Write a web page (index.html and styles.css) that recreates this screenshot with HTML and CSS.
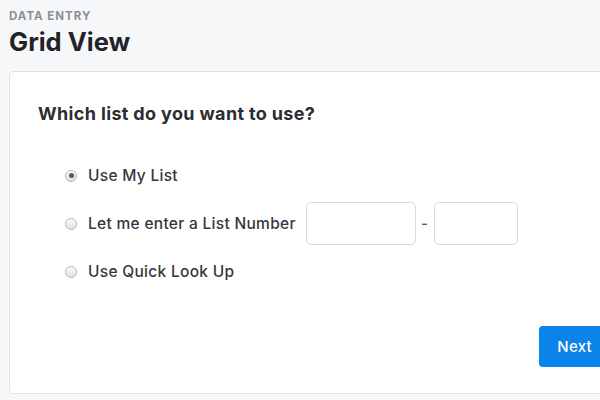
FILE: index.html
```html
<!DOCTYPE html>
<html lang="en">
<head>
    <meta charset="UTF-8">
    <meta name="viewport" content="width=device-width, initial-scale=1.0">
    <title>Grid View</title>
    <link rel="stylesheet" href="styles.css">
</head>
<body>
    <header class="page-header">
        <div class="eyebrow">DATA ENTRY</div>
        <h1>Grid View</h1>
    </header>

    <section class="card">
        <h2>Which list do you want to use?</h2>

        <div class="options">
            <label class="option">
                <input type="radio" name="list" checked>
                <span class="radio"></span>
                <span>Use My List</span>
            </label>
            <div class="option">
                <label class="option-label">
                    <input type="radio" name="list">
                    <span class="radio"></span>
                    <span>Let me enter a List Number</span>
                </label>
                <input type="text" class="field field-wide">
                <span class="dash">-</span>
                <input type="text" class="field field-narrow">
            </div>
            <label class="option">
                <input type="radio" name="list">
                <span class="radio"></span>
                <span>Use Quick Look Up</span>
            </label>
        </div>

        <div class="actions">
            <button class="btn-primary">Next</button>
        </div>
    </section>
</body>
</html>
```

FILE: styles.css
```css
/* Reset */
* {
    margin: 0;
    padding: 0;
    box-sizing: border-box;
}

body {
    font-family: Inter, "Liberation Sans", sans-serif;
    background-color: #f6f7f9;
    color: #2b2f33;
    padding: 9px 0 0 9px;
    overflow: hidden;
    width: 600px;
    height: 400px;
}

/* Header */
.eyebrow {
    font-size: 11.5px;
    font-weight: 700;
    letter-spacing: 1px;
    color: #8b9098;
    line-height: 14px;
}

.page-header h1 {
    font-size: 25.5px;
    font-weight: 700;
    color: #1f2327;
    line-height: 30px;
    margin-top: 4px;
    letter-spacing: 0;
}

/* Card */
.card {
    width: 630px;
    margin-top: 14px;
    background-color: #ffffff;
    border: 1px solid #dfe2e6;
    border-radius: 4px;
    padding: 30px 28px 26px 28px;
}

.card h2 {
    font-size: 18px;
    font-weight: 700;
    color: #2a2e32;
    line-height: 24px;
    letter-spacing: 0.35px;
}

.options {
    display: flex;
    flex-direction: column;
    gap: 5px;
    margin-top: 28px;
    padding-left: 27px;
}

.option,
.option-label {
    display: flex;
    align-items: center;
    height: 43px;
    font-size: 15.5px;
    font-weight: 500;
    letter-spacing: 0.3px;
    color: #34383c;
    cursor: pointer;
}

.option input[type="radio"],
.option-label input[type="radio"] {
    display: none;
}

/* Mac-style radio */
.radio {
    width: 12px;
    height: 12px;
    border-radius: 50%;
    border: 1px solid #b5b8bc;
    background: linear-gradient(#fbfbfb, #dfe0e2);
    margin-right: 11px;
    position: relative;
    flex-shrink: 0;
}

input[type="radio"]:checked + .radio::after {
    content: "";
    position: absolute;
    top: 2.5px;
    left: 2.5px;
    width: 5px;
    height: 5px;
    border-radius: 50%;
    background-color: #55585c;
}

.field {
    height: 43px;
    border: 1px solid #d6dae0;
    border-radius: 5px;
    font-size: 15px;
    padding: 0 10px;
    outline: none;
}

.field-wide {
    width: 110px;
    margin-left: 10px;
}

.field-narrow {
    width: 84px;
}

.dash {
    width: 18px;
    text-align: center;
    font-size: 15px;
    color: #5a5e62;
}

/* Actions */
.actions {
    display: flex;
    justify-content: flex-end;
    margin-top: 33px;
}

.btn-primary {
    background-color: #0a84e8;
    color: #ffffff;
    font-family: inherit;
    font-size: 15px;
    font-weight: 500;
    letter-spacing: 0.3px;
    height: 41px;
    padding: 0 18px;
    border: none;
    border-radius: 4px;
    cursor: pointer;
}

.btn-primary:hover {
    background-color: #0874cc;
}
```
